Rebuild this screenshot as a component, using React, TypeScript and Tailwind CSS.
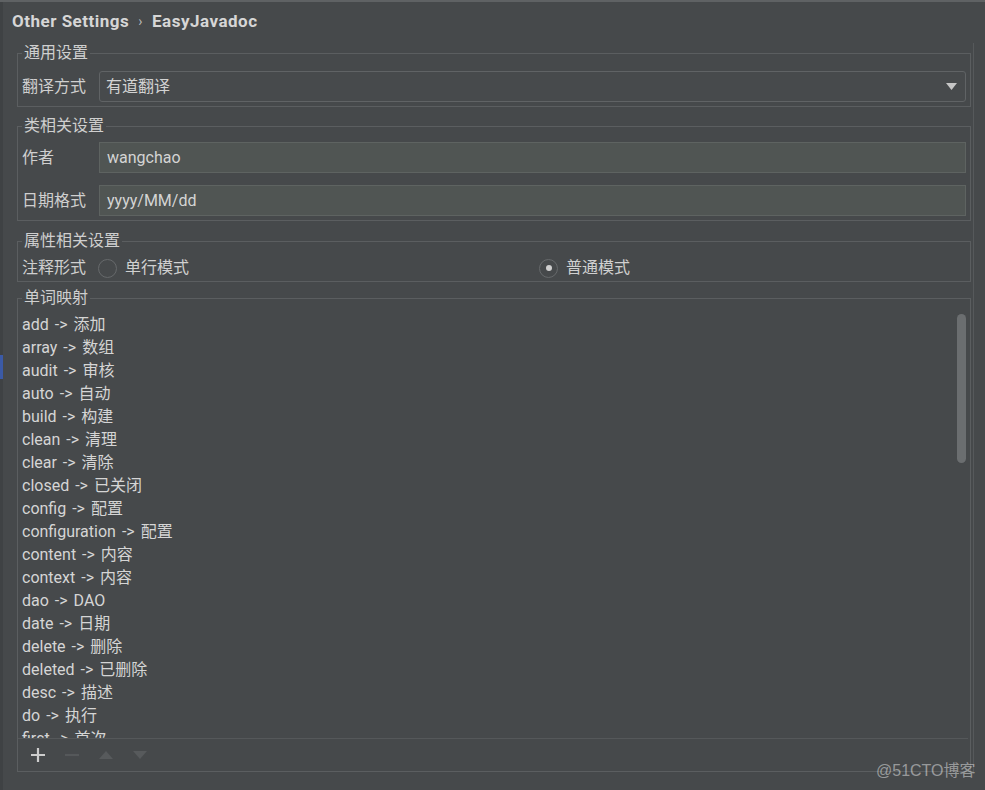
import React from "react"

const words: [string, string][] = [
  ["add", "添加"],
  ["array", "数组"],
  ["audit", "审核"],
  ["auto", "自动"],
  ["build", "构建"],
  ["clean", "清理"],
  ["clear", "清除"],
  ["closed", "已关闭"],
  ["config", "配置"],
  ["configuration", "配置"],
  ["content", "内容"],
  ["context", "内容"],
  ["dao", "DAO"],
  ["date", "日期"],
  ["delete", "删除"],
  ["deleted", "已删除"],
  ["desc", "描述"],
  ["do", "执行"],
  ["first", "首次"],
  ["get", "获取"],
]

function Group({ title, children, className = "" }: { title: string; children: React.ReactNode; className?: string }) {
  return (
    <fieldset className={`border border-[#5b5e60] px-1 ${className}`}>
      <legend className="px-[2px] text-[16px] leading-5 text-[#cfcfcf]">{title}</legend>
      {children}
    </fieldset>
  )
}

function Radio({ checked, label }: { checked?: boolean; label: string }) {
  return (
    <div className="flex items-center">
      <span className="flex h-[19px] w-[19px] items-center justify-center rounded-full border-[1.5px] border-[#66696b]">
        {checked && <span className="h-[6px] w-[6px] rounded-full bg-[#cfcfcf]" />}
      </span>
      <span className="ml-[8px] text-[#d0d0d0]">{label}</span>
    </div>
  )
}

export default function App() {
  return (
    <div className="relative flex h-[790px] w-[985px] overflow-hidden border-t-2 border-[#5f6264] bg-[#46494b] font-[Roboto,'Noto_Sans_CJK_SC',sans-serif] text-[16px] text-[#cfcfcf]">
      {/* splitter strip */}
      <div className="w-[3px] shrink-0 bg-[#3f4244] pt-[353px]">
        <div className="h-[24px] w-[3px] bg-[#3b5aa6]" />
      </div>

      <div className="flex flex-1 flex-col">
        {/* breadcrumb */}
        <div className="flex h-[41px] items-center pl-[9px] pb-[2px] text-[17px] font-bold tracking-[0.5px] text-[#d6d6d6]">
          <span>Other Settings</span>
          <span className="mx-[9px] text-[14px] font-normal text-[#b8b8b8]">›</span>
          <span>EasyJavadoc</span>
        </div>

        <div className="ml-[14px] mr-[11px] flex flex-col border-r border-[#56595b] pr-[2px]">
          <Group title="通用设置" className="pb-[4px]">
            <div className="mt-[8px] flex items-center">
              <span className="w-[77px]">翻译方式</span>
              <div className="flex h-[31px] flex-1 items-center justify-between rounded-[3px] border border-[#606365] bg-[#474a4c] pl-[6px] pr-[8px]">
                <span className="text-[#d2d2d2]">有道翻译</span>
                <svg width="11" height="7" viewBox="0 0 11 7">
                  <path d="M0 0 H11 L5.5 7 Z" fill="#c6c6c6" />
                </svg>
              </div>
            </div>
          </Group>

          <Group title="类相关设置" className="mt-[9px] pb-[4px]">
            <div className="mt-[6px] flex items-center">
              <span className="w-[77px]">作者</span>
              <div className="flex h-[31px] flex-1 items-center border border-[#5e6361] bg-[#505553] pl-[7px] text-[#d4d4d4]">
                wangchao
              </div>
            </div>
            <div className="mt-[12px] flex items-center">
              <span className="w-[77px]">日期格式</span>
              <div className="flex h-[31px] flex-1 items-center border border-[#5e6361] bg-[#505553] pl-[7px] text-[#d4d4d4]">
                yyyy/MM/dd
              </div>
            </div>
          </Group>

          <Group title="属性相关设置" className="mt-[10px]">
            <div className="mt-[4px] flex h-[26px] items-center">
              <span className="w-[76px]">注释形式</span>
              <div className="w-[441px]">
                <Radio label="单行模式" />
              </div>
              <Radio checked label="普通模式" />
            </div>
          </Group>

          <fieldset className="mt-[6px] border border-[#5b5e60]">
            <legend className="ml-1 px-[2px] text-[16px] leading-5 text-[#cfcfcf]">单词映射</legend>
            <div className="mt-[5px] flex h-[425px] overflow-hidden pl-1 pr-[4px]">
              <div className="flex-1 [word-spacing:2px]">
                {words.map(([en, zh]) => (
                  <div key={en} className="flex h-[23px] items-center whitespace-pre text-[#d5d5d5]">
                    {en} -&gt; {zh}
                  </div>
                ))}
              </div>
              <div className="w-[9px] pt-[1px]">
                <div className="h-[149px] w-[9px] rounded-full bg-[#6b6e70]" />
              </div>
            </div>
            <div className="mr-[2px] flex h-[33px] items-center gap-[20px] border-t border-[#55585a] pl-[13px] pb-[1px]">
              <svg width="14" height="14" viewBox="0 0 14 14">
                <path d="M7 0 V14 M0 7 H14" stroke="#cdcdcd" strokeWidth="2.2" />
              </svg>
              <svg width="14" height="14" viewBox="0 0 14 14">
                <path d="M0 7 H14" stroke="#55585a" strokeWidth="2.2" />
              </svg>
              <svg width="14" height="10" viewBox="0 0 14 10">
                <path d="M7 1 L14 9 H0 Z" fill="#575a5c" />
              </svg>
              <svg width="14" height="10" viewBox="0 0 14 10">
                <path d="M0 1 H14 L7 9 Z" fill="#575a5c" />
              </svg>
            </div>
          </fieldset>
        </div>
      </div>

      {/* watermark */}
      <div className="absolute left-[876px] top-[760px] font-['Liberation_Sans','Noto_Sans_CJK_SC',sans-serif] text-[16px] leading-[18px] text-white/45">
        @51CTO博客
      </div>
    </div>
  )
}
